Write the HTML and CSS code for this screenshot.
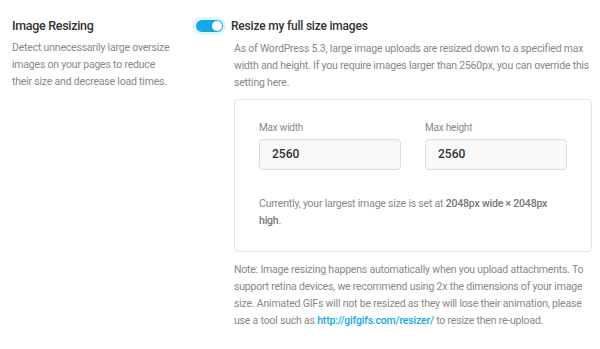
FILE: index.html
```html
<!DOCTYPE html>
<html>
<head>
<meta charset="utf-8">
<link rel="stylesheet" href="styles.css">
</head>
<body>
<div class="row">
  <div class="col-label">
    <div class="title">Image Resizing</div>
    <p class="desc">Detect unnecessarily large oversize images on your pages to reduce their size and decrease load times.</p>
  </div>
  <div class="col-main">
    <div class="toggle-row">
      <span class="toggle"><span class="track"><span class="knob"></span></span></span>
      <span class="toggle-label">Resize my full size images</span>
    </div>
    <div class="content">
      <p class="desc">As of WordPress 5.3, large image uploads are resized down to a specified max width and height. If you require images larger than 2560px, you can override this setting here.</p>
      <div class="box">
        <div class="fields">
          <div class="field">
            <label class="field-label">Max width</label>
            <div class="input">2560</div>
          </div>
          <div class="field">
            <label class="field-label">Max height</label>
            <div class="input">2560</div>
          </div>
        </div>
        <p class="desc box-note">Currently, your largest image size is set at <strong>2048px wide × 2048px high</strong>.</p>
      </div>
      <p class="desc note">Note: Image resizing happens automatically when you upload attachments. To support retina devices, we recommend using 2x the dimensions of your image size. Animated GIFs will not be resized as they will lose their animation, please use a tool such as <a href="#">http://gifgifs.com/resizer/</a> to resize then re-upload.</p>
    </div>
  </div>
</div>
</body>
</html>
```
FILE: styles.css
```css
html, body {
  margin: 0;
  padding: 0;
  background: #fff;
}
body {
  font-family: Roboto, "Liberation Sans", sans-serif;
  color: #333;
  -webkit-font-smoothing: antialiased;
}
.row {
  display: flex;
  padding: 15px 8px 0 12px;
}
.col-label {
  width: 181px;
  flex: none;
}
.title {
  font-size: 12.5px;
  font-weight: 500;
  line-height: 22px;
  letter-spacing: -0.3px;
  color: #333;
}
.desc {
  margin: 0;
  font-size: 10.5px;
  line-height: 17px;
  letter-spacing: -0.2px;
  color: #888;
}
.col-label .desc {
  margin-top: 1.5px;
  max-width: 160px;
}
.col-main {
  flex: 1;
  min-width: 0;
}
.toggle-row {
  display: flex;
  align-items: center;
  height: 22px;
}
.toggle {
  width: 34px;
  height: 18px;
  border-radius: 10px;
  background: #e1f5fd;
  display: flex;
  align-items: center;
  justify-content: center;
  margin-left: -1px;
  margin-right: 5px;
}
.track {
  width: 27px;
  height: 12px;
  border-radius: 6px;
  background: #17a8e3;
  position: relative;
}
.knob {
  position: absolute;
  right: 1px;
  top: 1px;
  width: 10px;
  height: 10px;
  border-radius: 50%;
  background: #fff;
}
.toggle-label {
  font-size: 12px;
  font-weight: 500;
  letter-spacing: -0.2px;
  color: #333;
}
.content {
  padding-left: 41px;
  padding-top: 2.5px;
}
.box {
  margin-top: 8.5px;
  border: 1px solid #e6e6e6;
  border-radius: 4px;
  padding: 21px 24px 22px;
}
.fields {
  display: flex;
  gap: 24px;
}
.field {
  flex: 1;
}
.field-label {
  display: block;
  font-size: 10px;
  line-height: 14px;
  letter-spacing: -0.2px;
  color: #888;
  margin-bottom: 4px;
}
.input {
  box-sizing: border-box;
  height: 31px;
  border: 1px solid #ddd;
  border-radius: 4px;
  background: #f8f8f8;
  padding: 0 12px;
  font-size: 12px;
  font-weight: 500;
  line-height: 29px;
  color: #333;
}
.box-note {
  margin-top: 25px;
}
.box-note strong {
  font-weight: 500;
  color: #777;
}
.note {
  margin-top: 8.5px;
}
.note a {
  color: #17a8e3;
  font-weight: 500;
  text-decoration: none;
}
```
